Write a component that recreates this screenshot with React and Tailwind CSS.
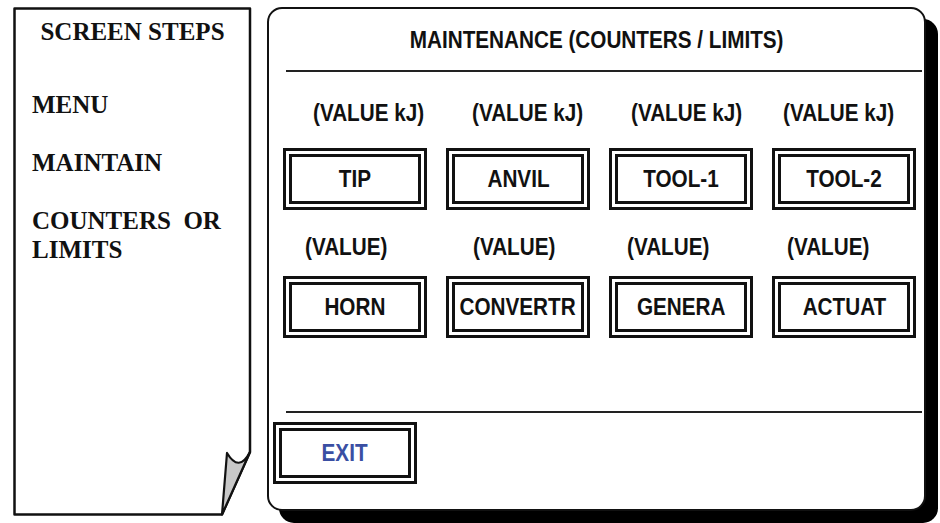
import React from "react";

// Datos de las dos filas de contadores
const topRow = [
  { label: "(VALUE kJ)", name: "TIP", shift: "ml-[30px]" },
  { label: "(VALUE kJ)", name: "ANVIL", shift: "ml-[26px]" },
  { label: "(VALUE kJ)", name: "TOOL-1", shift: "ml-[22px]" },
  { label: "(VALUE kJ)", name: "TOOL-2", shift: "ml-[11px]" },
];

const bottomRow = [
  { label: "(VALUE)", name: "HORN", shift: "ml-[22px]" },
  { label: "(VALUE)", name: "CONVERTR", shift: "ml-[27px]" },
  { label: "(VALUE)", name: "GENERA", shift: "ml-[18px]" },
  { label: "(VALUE)", name: "ACTUAT", shift: "ml-[15px]" },
];

// Texto algo estrecho, como en la captura
const Narrow = ({ children, className = "" }) => (
  <span className={`inline-block scale-x-[0.9] whitespace-nowrap ${className}`}>{children}</span>
);

const DoubleButton = ({ children, className = "" }) => (
  <div
    className={`w-[144px] h-[62px] border-[9px] border-double border-[#111] flex items-center justify-center ${className}`}
  >
    <Narrow>{children}</Narrow>
  </div>
);

const CounterRow = ({ items, labelGap, buttonGap }) => (
  <div className={`grid grid-cols-[repeat(4,144px)] gap-x-[19px] ${labelGap}`}>
    {items.map((item) => (
      <div key={item.name} className="flex flex-col">
        <div className={`${item.shift} leading-[24px]`}>
          <Narrow className="origin-left">{item.label}</Narrow>
        </div>
        <DoubleButton className={buttonGap}>{item.name}</DoubleButton>
      </div>
    ))}
  </div>
);

const App = () => {
  return (
    <div className="w-[940px] h-[523px] bg-white flex gap-[15px] pl-[13px] pt-[7px] overflow-hidden">
      {/* Panel izquierdo con esquina doblada */}
      <div className="relative w-[239px] h-[509px] shrink-0 pt-[10px] pl-[19px] font-['Liberation_Serif',serif] font-bold text-[25px] leading-[29px] text-[#111]">
        <svg className="absolute inset-0" width="239" height="509" viewBox="0 0 239 509">
          <path
            d="M1.5 1.5 H237 V445 L209 507.5 H1.5 Z"
            fill="white"
            stroke="#111"
            strokeWidth="2.5"
            strokeLinejoin="round"
          />
          <path
            d="M237 445 Q226 466 214 446 L209 507.5 Z"
            fill="#c8c8c8"
            stroke="#111"
            strokeWidth="2.2"
            strokeLinejoin="round"
          />
        </svg>
        <div className="relative flex flex-col">
          <p className="text-center pr-[19px]">SCREEN STEPS</p>
          <p className="mt-[44px]">MENU</p>
          <p className="mt-[29px]">MAINTAIN</p>
          <p className="mt-[29px] whitespace-pre">{"COUNTERS  OR\nLIMITS"}</p>
        </div>
      </div>

      {/* Panel principal */}
      <div className="w-[659px] h-[504px] shrink-0 bg-white border-2 border-[#111] rounded-[15px] shadow-[12px_12px_0_0_#000] flex flex-col font-['Liberation_Sans',Arial,sans-serif] font-bold text-[23px] text-[#111]">
        <h1 className="mt-[19px] text-center leading-[24px]">
          <Narrow>MAINTENANCE (COUNTERS / LIMITS)</Narrow>
        </h1>
        <div className="mt-[18px] ml-[17px] mr-[2px] h-[2px] bg-[#222]" />

        <div className="pl-[14px]">
          <CounterRow items={topRow} labelGap="mt-[29px]" buttonGap="mt-[23px]" />
          <CounterRow items={bottomRow} labelGap="mt-[25px]" buttonGap="mt-[17px]" />
        </div>

        <div className="mt-[73px] ml-[17px] mr-[2px] h-[2px] bg-[#222]" />

        <DoubleButton className="mt-[9px] ml-[4px] h-[61px] text-[#3a4fa3]">EXIT</DoubleButton>
      </div>
    </div>
  );
};

export default App;
